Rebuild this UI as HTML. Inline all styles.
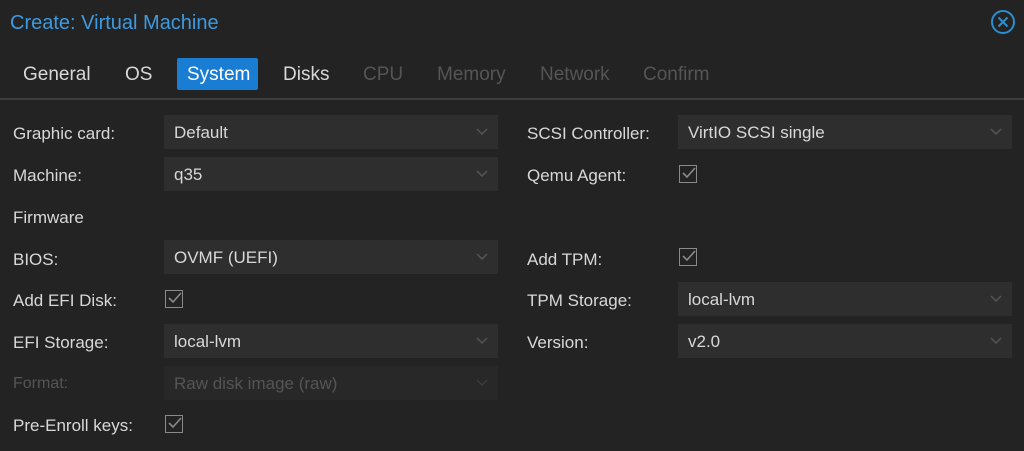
<!DOCTYPE html>
<html><head><style>
body{margin:0;width:1024px;height:451px;background:#232323;font-family:"Liberation Sans",sans-serif;overflow:hidden;position:relative;color:#d8d8d8}
.a{position:absolute;white-space:nowrap}
.t{font-size:19px;top:64px}
.l{font-size:17px}
.f{position:absolute;height:34px;background:#2e2e2e;font-size:17px;line-height:35px;padding-left:10px;box-sizing:border-box;color:#d8d8d8}
.f svg{position:absolute;right:10px;top:13px}
.cb{position:absolute;width:18px;height:18px;border:1.5px solid #8a8a8a;box-sizing:border-box}
.cb svg{position:absolute;left:1px;top:0}
</style></head><body>
<div class="a" style="left:10px;top:12px;font-size:20px;color:#3d9ae0">Create: Virtual Machine</div>
<svg class="a" style="left:990px;top:9px" width="26" height="26" viewBox="0 0 26 26"><circle cx="13" cy="13" r="11" fill="none" stroke="#2a8fd0" stroke-width="2"/><path d="M8.5 8.5L17.5 17.5M17.5 8.5L8.5 17.5" stroke="#2a8fd0" stroke-width="2"/></svg>
<div class="a t" style="left:23px">General</div>
<div class="a t" style="left:125px">OS</div>
<div class="a" style="left:177px;top:58px;width:81px;height:32px;background:#1a7dd4;border-radius:2px"></div>
<div class="a t" style="left:187px;color:#fff">System</div>
<div class="a t" style="left:283px">Disks</div>
<div class="a t" style="left:363px;color:#555">CPU</div>
<div class="a t" style="left:437px;color:#555">Memory</div>
<div class="a t" style="left:540px;color:#555">Network</div>
<div class="a t" style="left:643px;color:#555">Confirm</div>
<div class="a" style="left:0;top:98px;width:1024px;height:2px;background:#3c3c3c"></div>

<div class="a l" style="left:13px;top:124px">Graphic card:</div>
<div class="f" style="left:164px;top:115px;width:334px">Default<svg width="12" height="8"><path d="M1 1L6 6L11 1" stroke="#555" fill="none" stroke-width="1.5"/></svg></div>
<div class="a l" style="left:13px;top:166px">Machine:</div>
<div class="f" style="left:164px;top:157px;width:334px">q35<svg width="12" height="8"><path d="M1 1L6 6L11 1" stroke="#555" fill="none" stroke-width="1.5"/></svg></div>
<div class="a l" style="left:13px;top:208px">Firmware</div>
<div class="a l" style="left:13px;top:250px">BIOS:</div>
<div class="f" style="left:164px;top:240px;width:334px">OVMF (UEFI)<svg width="12" height="8"><path d="M1 1L6 6L11 1" stroke="#555" fill="none" stroke-width="1.5"/></svg></div>
<div class="a l" style="left:13px;top:291px">Add EFI Disk:</div>
<div class="cb" style="left:165px;top:290px"><svg width="16" height="15"><path d="M2 7L6 11L14 2" stroke="#8a8a8a" fill="none" stroke-width="1.6"/></svg></div>
<div class="a l" style="left:13px;top:333px">EFI Storage:</div>
<div class="f" style="left:164px;top:324px;width:334px">local-lvm<svg width="12" height="8"><path d="M1 1L6 6L11 1" stroke="#555" fill="none" stroke-width="1.5"/></svg></div>
<div class="a l" style="left:13px;top:375px;font-size:16px;color:#555">Format:</div>
<div class="f" style="left:164px;top:366px;width:334px;background:#282828;color:#555">Raw disk image (raw)<svg width="12" height="8"><path d="M1 1L6 6L11 1" stroke="#3c3c3c" fill="none" stroke-width="1.5"/></svg></div>
<div class="a l" style="left:13px;top:416px">Pre-Enroll keys:</div>
<div class="cb" style="left:165px;top:415px"><svg width="16" height="15"><path d="M2 7L6 11L14 2" stroke="#8a8a8a" fill="none" stroke-width="1.6"/></svg></div>

<div class="a l" style="left:527px;top:124px">SCSI Controller:</div>
<div class="f" style="left:678px;top:115px;width:334px">VirtIO SCSI single<svg width="12" height="8"><path d="M1 1L6 6L11 1" stroke="#555" fill="none" stroke-width="1.5"/></svg></div>
<div class="a l" style="left:527px;top:166px">Qemu Agent:</div>
<div class="cb" style="left:679px;top:165px"><svg width="16" height="15"><path d="M2 7L6 11L14 2" stroke="#8a8a8a" fill="none" stroke-width="1.6"/></svg></div>
<div class="a l" style="left:527px;top:250px">Add TPM:</div>
<div class="cb" style="left:679px;top:248px"><svg width="16" height="15"><path d="M2 7L6 11L14 2" stroke="#8a8a8a" fill="none" stroke-width="1.6"/></svg></div>
<div class="a l" style="left:527px;top:291px">TPM Storage:</div>
<div class="f" style="left:678px;top:282px;width:334px">local-lvm<svg width="12" height="8"><path d="M1 1L6 6L11 1" stroke="#555" fill="none" stroke-width="1.5"/></svg></div>
<div class="a l" style="left:527px;top:333px">Version:</div>
<div class="f" style="left:678px;top:324px;width:334px">v2.0<svg width="12" height="8"><path d="M1 1L6 6L11 1" stroke="#555" fill="none" stroke-width="1.5"/></svg></div>
</body></html>
